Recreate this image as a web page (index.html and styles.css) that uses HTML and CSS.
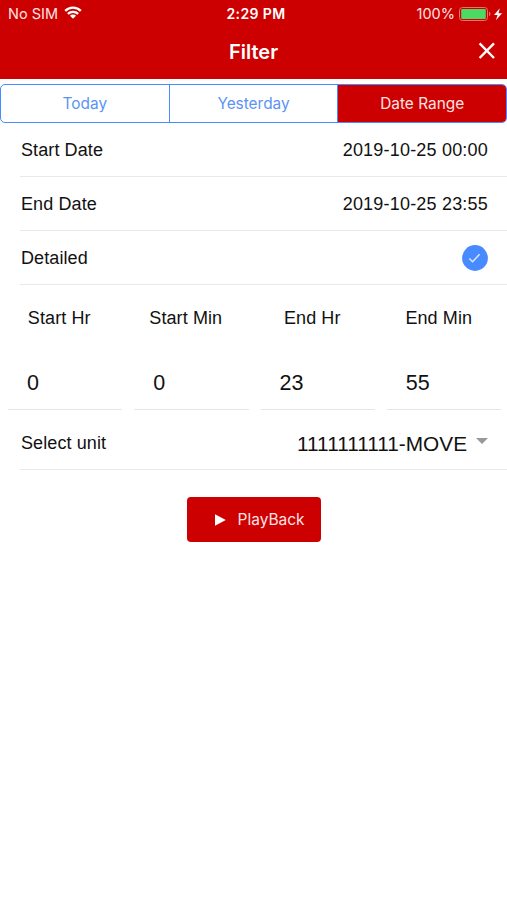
FILE: index.html
```html
<!DOCTYPE html>
<html lang="en">
<head>
  <meta charset="UTF-8" />
  <meta name="viewport" content="width=device-width, initial-scale=1.0"/>
  <title>Filter</title>
  <link rel="stylesheet" href="styles.css">
</head>
<body>
  <header>
    <div class="status-bar">
      <div class="carrier">
        <span>No SIM</span>
        <svg class="wifi" width="18" height="13" viewBox="0 0 18 13" fill="none" stroke="#fff" stroke-width="2.3">
          <path d="M1.2 4.9a11 11 0 0 1 15.6 0"/>
          <path d="M3.9 7.9a7.2 7.2 0 0 1 10.2 0"/>
          <path d="M9 12.8 6 9.8a4.2 4.2 0 0 1 6 0z" fill="#fff" stroke="none"/>
        </svg>
      </div>
      <div class="time">2:29 PM</div>
      <div class="power">
        <span>100%</span>
        <svg width="45" height="14" viewBox="0 0 45 14">
          <rect x="0.5" y="0.5" width="28" height="13" rx="3" fill="none" stroke="#e57373"/>
          <rect x="2.2" y="2" width="24.6" height="10" rx="1.2" fill="#4cd964"/>
          <path d="M30 4.8q1.5 .6 1.5 2.2t-1.5 2.2z" fill="#e57373"/>
          <path d="M40.8 1.3 35 8h3.6l-1.7 5.2 6.2-7h-3.6z" fill="#fff"/>
        </svg>
      </div>
    </div>
    <div class="title-bar">
      <h1>Filter</h1>
      <button class="close-btn" aria-label="Close">
        <svg width="18" height="18" viewBox="0 0 18 18" stroke="#fff" stroke-width="2.4">
          <path d="M1.6 1.4 16 16M16 1.4 1.6 16"/>
        </svg>
      </button>
    </div>
  </header>
  <main>
    <div class="segment">
      <button class="seg-btn">Today</button>
      <button class="seg-btn">Yesterday</button>
      <button class="seg-btn active">Date Range</button>
    </div>
    <div class="row">
      <span>Start Date</span>
      <span class="date">2019-10-25 00:00</span>
    </div>
    <div class="row">
      <span>End Date</span>
      <span class="date">2019-10-25 23:55</span>
    </div>
    <div class="row">
      <span>Detailed</span>
      <svg class="check" width="26" height="26" viewBox="0 0 26 26">
        <circle cx="13" cy="13" r="12.9" fill="#488aff"/>
        <path d="M7.3 13.4 10.6 16.7 17.6 9.2" fill="none" stroke="#dce9ff" stroke-width="1.4"/>
      </svg>
    </div>
    <div class="labels">
      <span>Start Hr</span>
      <span>Start Min</span>
      <span>End Hr</span>
      <span>End Min</span>
    </div>
    <div class="values">
      <div class="value">0</div>
      <div class="value">0</div>
      <div class="value">23</div>
      <div class="value">55</div>
    </div>
    <div class="row unit-row">
      <span>Select unit</span>
      <div class="select">
        <span>1111111111-MOVE</span>
        <span class="arrow"></span>
      </div>
    </div>
    <button class="play-btn">
      <svg width="11" height="12" viewBox="0 0 11 12"><path d="M0 0.3v11.4L10.8 6z" fill="#fff"/></svg>
      <span>PlayBack</span>
    </button>
  </main>
</body>
</html>
```
FILE: styles.css
```css
* {
  box-sizing: border-box;
}
body {
  font-family: "Liberation Sans", Arial, sans-serif;
  font-size: 18px;
  letter-spacing: 0.1px;
  background: #fff;
  color: #111;
  margin: 0;
}
button {
  font-family: Inter, sans-serif;
  padding: 0;
  border: none;
  background: none;
}
svg {
  display: block;
}
header {
  height: 79px;
  background: #cc0000;
  color: #fff;
  font-family: Inter, sans-serif;
  letter-spacing: 0;
}
.status-bar {
  display: grid;
  grid-template-columns: 1fr auto 1fr;
  align-items: center;
  height: 27px;
  padding: 0 3px 0 8px;
  font-size: 14.5px;
}
.carrier,
.power {
  display: flex;
  align-items: center;
  color: #ffe3e3;
}
.carrier {
  gap: 6px;
}
.wifi {
  margin-top: -2px;
}
.time {
  font-weight: 600;
  font-size: 14px;
  letter-spacing: 0.4px;
}
.power {
  justify-content: flex-end;
  gap: 4px;
}
.title-bar {
  display: grid;
  grid-template-columns: 1fr auto 1fr;
  align-items: center;
  height: 49px;
  padding: 0 11px;
}
.title-bar h1 {
  grid-column: 2;
  margin: 0;
  font-size: 20px;
  font-weight: 600;
}
.close-btn {
  justify-self: end;
  margin-top: -2px;
}
.segment {
  display: flex;
  height: 39px;
  margin-top: 5px;
  border: 1px solid #488aff;
  border-radius: 5px;
  overflow: hidden;
}
.seg-btn {
  flex: 1;
  color: #5b93f5;
  font-size: 15.4px;
}
.seg-btn + .seg-btn {
  border-left: 1px solid #488aff;
}
.seg-btn.active {
  background: #cc0000;
  color: #ffe3e3;
}
.row {
  display: flex;
  align-items: center;
  justify-content: space-between;
  height: 54px;
  margin-left: 20px;
  padding: 2px 19px 0 1px;
  border-bottom: 1px solid #e9e9e9;
}
.date {
  letter-spacing: 0.2px;
}
.check {
  margin-top: -1px;
}
.labels {
  display: grid;
  grid-template-columns: repeat(4, 1fr);
  align-items: center;
  height: 66px;
  margin-left: -4px;
  padding: 0 5px 0 0;
  text-align: center;
}
.values {
  display: grid;
  grid-template-columns: repeat(4, 1fr);
  gap: 12px;
  padding: 0 6px 0 8px;
}
.value {
  height: 59px;
  padding: 19px 0 0 19px;
  border-bottom: 1px solid #e6e6e6;
  font-size: 21.5px;
  line-height: 26px;
}
.unit-row {
  height: 60px;
  padding-top: 8px;
}
.select {
  display: flex;
  align-items: center;
  gap: 9px;
  font-size: 20.8px;
  letter-spacing: 0;
}
.arrow {
  margin-top: -5px;
  border: 6px solid transparent;
  border-top-color: #999;
  border-bottom: none;
}
.play-btn {
  display: flex;
  align-items: center;
  gap: 12px;
  width: 134px;
  height: 45px;
  margin: 27px auto 0;
  padding-left: 28px;
  border-radius: 4px;
  background: #cc0000;
  color: #ffe3e3;
  font-size: 15.5px;
}
```
